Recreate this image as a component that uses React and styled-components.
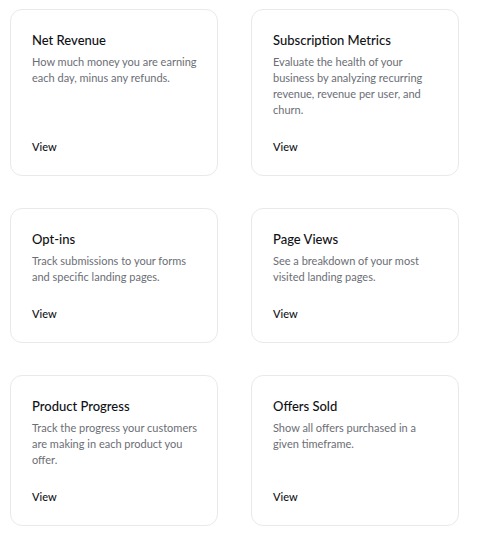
import React from "react";
import styled, { createGlobalStyle } from "styled-components";

const GlobalStyle = createGlobalStyle`
  body {
    margin: 0;
    background: #ffffff;
    font-family: Lato, "Open Sans", sans-serif;
  }
`;

const Grid = styled.div`
  display: grid;
  grid-template-columns: repeat(2, 208px);
  column-gap: 33px;
  row-gap: 32px;
  padding: 9px 0 0 10px;
`;

const Card = styled.div`
  display: flex;
  flex-direction: column;
  box-sizing: border-box;
  border: 1px solid #e9e9eb;
  border-radius: 12px;
  padding: 21px 17px 21px 21px;
  background: #fff;
`;

const Title = styled.h3`
  margin: 0;
  font-size: 13px;
  line-height: 18px;
  font-weight: 500;
  color: #0f1115;
`;

const Desc = styled.p`
  margin: 5px 0 0;
  font-size: 11px;
  line-height: 16px;
  color: #6b6e75;
`;

const ViewLink = styled.a`
  margin-top: auto;
  padding-top: 22px;
  font-size: 11px;
  line-height: 14px;
  font-weight: 500;
  color: #0f1115;
  text-decoration: none;
  cursor: pointer;
`;

const reports = [
  {
    title: "Net Revenue",
    text: "How much money you are earning each day, minus any refunds.",
  },
  {
    title: "Subscription Metrics",
    text: "Evaluate the health of your business by analyzing recurring revenue, revenue per user, and churn.",
  },
  {
    title: "Opt-ins",
    text: "Track submissions to your forms and specific landing pages.",
  },
  {
    title: "Page Views",
    text: "See a breakdown of your most visited landing pages.",
  },
  {
    title: "Product Progress",
    text: "Track the progress your customers are making in each product you offer.",
  },
  {
    title: "Offers Sold",
    text: "Show all offers purchased in a given timeframe.",
  },
];

export default function App() {
  return (
    <>
      <GlobalStyle />
      <Grid>
        {reports.map((r) => (
          <Card key={r.title}>
            <Title>{r.title}</Title>
            <Desc>{r.text}</Desc>
            <ViewLink>View</ViewLink>
          </Card>
        ))}
      </Grid>
    </>
  );
}
